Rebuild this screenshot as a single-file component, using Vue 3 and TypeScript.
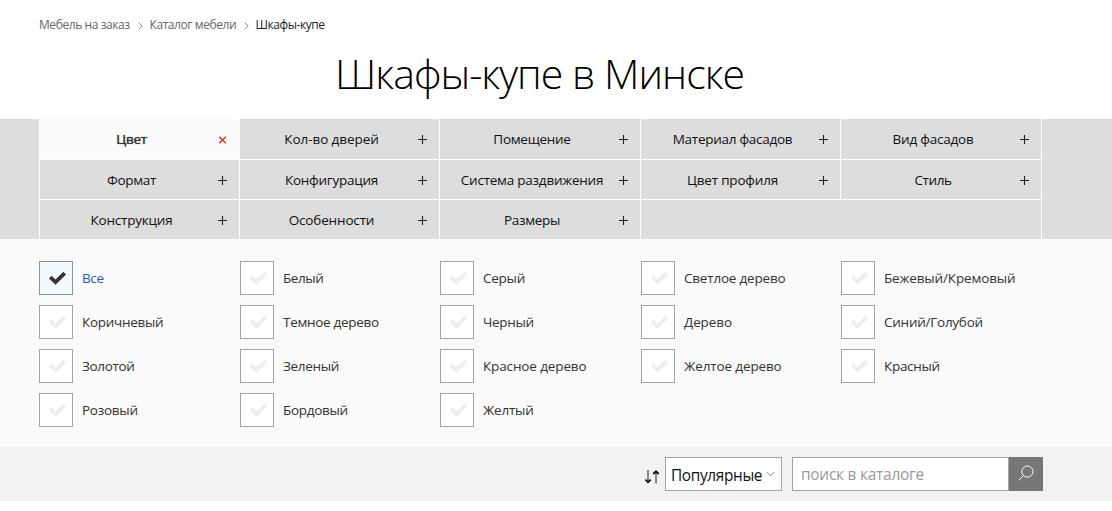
<script setup lang="ts">
import { ref } from 'vue'

interface Label {
  text: string
  /** letter spacing in px */
  ls: number
}

const filters: Label[] = [
  { text: 'Цвет', ls: -0.25 },
  { text: 'Кол-во дверей', ls: -0.08 },
  { text: 'Помещение', ls: -0.28 },
  { text: 'Материал фасадов', ls: -0.27 },
  { text: 'Вид фасадов', ls: -0.22 },
  { text: 'Формат', ls: -0.35 },
  { text: 'Конфигурация', ls: -0.24 },
  { text: 'Система раздвижения', ls: -0.24 },
  { text: 'Цвет профиля', ls: -0.2 },
  { text: 'Стиль', ls: -0.4 },
  { text: 'Конструкция', ls: -0.22 },
  { text: 'Особенности', ls: -0.16 },
  { text: 'Размеры', ls: -0.33 },
]

const colors: Label[] = [
  { text: 'Все', ls: -0.35 },
  { text: 'Белый', ls: -0.45 },
  { text: 'Серый', ls: -0.25 },
  { text: 'Светлое дерево', ls: -0.2 },
  { text: 'Бежевый/Кремовый', ls: -0.15 },
  { text: 'Коричневый', ls: -0.28 },
  { text: 'Темное дерево', ls: -0.3 },
  { text: 'Черный', ls: -0.33 },
  { text: 'Дерево', ls: -0.1 },
  { text: 'Синий/Голубой', ls: -0.25 },
  { text: 'Золотой', ls: -0.35 },
  { text: 'Зеленый', ls: -0.33 },
  { text: 'Красное дерево', ls: -0.13 },
  { text: 'Желтое дерево', ls: -0.13 },
  { text: 'Красный', ls: -0.3 },
  { text: 'Розовый', ls: -0.27 },
  { text: 'Бордовый', ls: -0.3 },
  { text: 'Желтый', ls: -0.25 },
]

const activeFilter = ref(0)
const selected = ref(0)
</script>

<template>
  <div class="page">
    <nav class="crumbs">
      <a class="c1">Мебель на заказ</a>
      <svg width="5" height="8" viewBox="0 0 5 8"><path d="M.7 .7L4.2 4L.7 7.3" /></svg>
      <a class="c2">Каталог мебели</a>
      <svg width="5" height="8" viewBox="0 0 5 8"><path d="M.7 .7L4.2 4L.7 7.3" /></svg>
      <span class="current">Шкафы-купе</span>
    </nav>

    <h1>Шкафы-купе в Минске</h1>

    <section class="filters">
      <div class="grid">
        <div
          v-for="(f, i) in filters"
          :key="f.text"
          class="cell"
          :class="{ active: i === activeFilter }"
          @click="activeFilter = i"
        >
          <span class="name" :style="{ letterSpacing: f.ls + 'px' }">{{ f.text }}</span>
          <svg v-if="i === activeFilter" class="sign" width="9" height="9" viewBox="0 0 9 9">
            <path class="close" d="M1.2 1.7L7.8 8.3M7.8 1.7L1.2 8.3" />
          </svg>
          <svg v-else class="sign" width="9" height="9" viewBox="0 0 9 9">
            <path class="plus" d="M0 4.5H9M4.5 0V9" />
          </svg>
        </div>
        <div class="cell rest"></div>
      </div>
    </section>

    <section class="options">
      <label
        v-for="(c, i) in colors"
        :key="c.text"
        class="option"
        :class="{ on: i === selected }"
        @click="selected = i"
      >
        <span class="box">
          <svg width="18" height="14" viewBox="0 0 18 14">
            <path d="M1.2 6L6.6 11.2L15.7 2.2" />
          </svg>
        </span>
        <span class="text" :style="{ letterSpacing: c.ls + 'px' }">{{ c.text }}</span>
      </label>
    </section>

    <section class="toolbar">
      <svg class="sort" width="15" height="14" viewBox="0 0 15 14">
        <path class="stem" d="M3 0V12M11 1.5V13.5" />
        <path class="head" d="M.3 9.6L3 12.3L5.7 9.6M8.3 4L11 1.3L13.7 4" />
      </svg>
      <div class="select">
        <span>Популярные</span>
        <svg width="9" height="6" viewBox="0 0 9 6"><path d="M.5 .8L4.5 4.8L8.5 .8" /></svg>
      </div>
      <div class="search">
        <div class="field"><span>поиск в каталоге</span></div>
        <div class="go">
          <svg width="16" height="16" viewBox="0 0 16 16">
            <circle cx="9.4" cy="6.6" r="5.6" />
            <path d="M5.4 10.6L.6 15.4" />
          </svg>
        </div>
      </div>
    </section>
  </div>
</template>

<style>
body {
  margin: 0;
  background: #fff;
}
</style>

<style scoped>
.page {
  width: 1112px;
  height: 511px;
  overflow: hidden;
  background: #fff;
  color: #111;
  font-family: 'Open Sans', 'Noto Sans', sans-serif;
  font-size: 13.5px;
}
svg {
  display: block;
  flex: none;
  fill: none;
}
.crumbs {
  display: flex;
  align-items: center;
  height: 20px;
  padding: 15px 0 0 39px;
  font-size: 12px;
  line-height: 20px;
  color: #666;
  white-space: nowrap;
}
.crumbs a,
.crumbs span {
  letter-spacing: -0.42px;
}
.crumbs svg {
  margin: 1px 7px 0 8px;
  stroke: #888;
}
.crumbs .c1 {
  width: 90.5px;
}
.crumbs .c2 {
  width: 86px;
}
.crumbs .current {
  color: #222;
}
h1 {
  box-sizing: border-box;
  height: 84px;
  margin: 0;
  padding: 10px 0 0 335px;
  font-size: 41px;
  font-weight: 300;
  line-height: 56px;
  letter-spacing: -0.95px;
  color: #000;
  white-space: nowrap;
}
.filters {
  height: 120px;
  background: #ddd;
}
.grid {
  display: grid;
  grid-template-columns: 200px 200px 201px 200px 201px;
  grid-template-rows: 41px 40px 39px;
  width: 1002px;
  margin-left: 39px;
  border-left: 1px solid #fff;
}
.cell {
  display: flex;
  align-items: center;
  border-right: 1px solid #fff;
  border-bottom: 1px solid #fff;
  padding-right: 12px;
  line-height: 20px;
  color: #111;
  white-space: nowrap;
}
.cell:nth-child(n + 11) {
  border-bottom: 0;
}
.rest {
  grid-column: span 2;
}
.name {
  flex: 1;
  text-align: center;
  padding-left: 5px;
}
.active {
  background: #fafafa;
}
.active .name {
  color: #333;
  text-shadow: 0 0 1px #333;
}
.sign {
  margin-top: 1px;
}
.plus {
  stroke: #222;
  stroke-width: 1.1;
}
.close {
  stroke: #f02020;
  stroke-width: 1.3;
}
.options {
  display: grid;
  grid-template-columns: 201px 200px 201px 200px 201px;
  grid-auto-rows: 34px;
  row-gap: 10px;
  box-sizing: border-box;
  height: 208px;
  padding: 22px 0 0 39px;
  background: #fafafa;
}
.option {
  display: flex;
  align-items: center;
  color: #333;
  white-space: nowrap;
}
.text {
  line-height: 20px;
  margin-bottom: 1px;
}
.box {
  flex: none;
  display: flex;
  box-sizing: border-box;
  width: 34px;
  height: 34px;
  padding: 9px 0 0 9px;
  margin-right: 9px;
  border: 1px solid #a3a3a3;
  background: #fff;
}
.box path {
  stroke: #ededed;
  stroke-width: 3.8;
}
.on {
  color: #2660a4;
}
.on .box {
  border-color: #7d9aac;
  background: #f3faff;
}
.on .box path {
  stroke: #333;
}
.toolbar {
  display: flex;
  box-sizing: border-box;
  height: 54px;
  padding: 10px 0 0 645px;
  background: #f2f2f2;
  font-size: 15.4px;
}
.sort {
  margin: 13px 5px 0 0;
}
.sort .stem {
  stroke: #888;
  stroke-width: 2;
}
.sort .head {
  stroke: #111;
  stroke-width: 1.8;
}
.select {
  display: flex;
  align-items: center;
  justify-content: space-between;
  box-sizing: border-box;
  width: 117px;
  height: 34px;
  padding: 2px 6px 0 5px;
  border: 1px solid #a3a3a3;
  background: #fff;
  letter-spacing: -0.35px;
  white-space: nowrap;
}
.select svg {
  margin-bottom: 3px;
  stroke: #888;
}
.search {
  display: flex;
  margin-left: 10px;
}
.field {
  display: flex;
  align-items: center;
  box-sizing: border-box;
  width: 217px;
  height: 34px;
  padding-left: 8px;
  border: 1px solid #a3a3a3;
  background: #fff;
  color: #999;
  letter-spacing: -0.22px;
}
.go {
  width: 34px;
  height: 34px;
  background: #777;
}
.go svg {
  margin: 8px 0 0 9px;
  stroke: #fff;
}
</style>
